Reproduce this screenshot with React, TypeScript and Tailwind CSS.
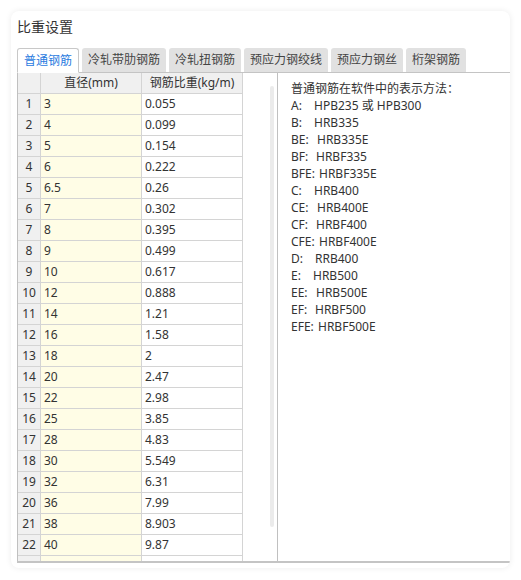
import React from "react";

const rows: [string, string][] = [
  ["3", "0.055"],
  ["4", "0.099"],
  ["5", "0.154"],
  ["6", "0.222"],
  ["6.5", "0.26"],
  ["7", "0.302"],
  ["8", "0.395"],
  ["9", "0.499"],
  ["10", "0.617"],
  ["12", "0.888"],
  ["14", "1.21"],
  ["16", "1.58"],
  ["18", "2"],
  ["20", "2.47"],
  ["22", "2.98"],
  ["25", "3.85"],
  ["28", "4.83"],
  ["30", "5.549"],
  ["32", "6.31"],
  ["36", "7.99"],
  ["38", "8.903"],
  ["40", "9.87"],
];

const tabs: { label: string; w: string; active?: boolean }[] = [
  { label: "普通钢筋", w: "w-[62px]", active: true },
  { label: "冷轧带肋钢筋", w: "w-[84px]" },
  { label: "冷轧扭钢筋", w: "w-[72px]" },
  { label: "预应力钢绞线", w: "w-[84px]" },
  { label: "预应力钢丝", w: "w-[72px]" },
  { label: "桁架钢筋", w: "w-[60px]" },
];

const legend: { k: string; w: string; v: string }[] = [
  { k: "A:", w: "w-[23px]", v: "HPB235 或 HPB300" },
  { k: "B:", w: "w-[23px]", v: "HRB335" },
  { k: "BE:", w: "w-[26px]", v: "HRB335E" },
  { k: "BF:", w: "w-[25px]", v: "HRBF335" },
  { k: "BFE:", w: "w-[28px]", v: "HRBF335E" },
  { k: "C:", w: "w-[23px]", v: "HRB400" },
  { k: "CE:", w: "w-[26px]", v: "HRB400E" },
  { k: "CF:", w: "w-[25px]", v: "HRBF400" },
  { k: "CFE:", w: "w-[28px]", v: "HRBF400E" },
  { k: "D:", w: "w-[24px]", v: "RRB400" },
  { k: "E:", w: "w-[22px]", v: "HRB500" },
  { k: "EE:", w: "w-[25px]", v: "HRB500E" },
  { k: "EF:", w: "w-[24px]", v: "HRBF500" },
  { k: "EFE:", w: "w-[27px]", v: "HRBF500E" },
];

export default function App() {
  return (
    <div
      className="w-[521px] h-[580px] bg-white pt-[11px] pl-[11px] text-[#333]"
      style={{ fontFamily: '"Noto Sans", "Noto Sans CJK SC", sans-serif' }}
    >
      <div className="w-[499px] h-[557px] rounded-[8px] bg-white shadow-[0_0_6px_rgba(0,0,0,0.08)] pt-[6px] pl-[6px] pb-[5px] flex flex-col overflow-hidden">
        <div className="h-[20px] leading-[20px] text-[14px]">比重设置</div>
        <div className="mt-[11px] flex items-end gap-[3px] h-[25px] relative z-10 -mb-px">
          {tabs.map((t) =>
            t.active ? (
              <div
                key={t.label}
                className={`${t.w} h-[25px] leading-[23px] text-center text-[12px] text-[#2a7be0] bg-white border border-[#c8c8c8] border-b-white rounded-t-[3px]`}
              >
                {t.label}
              </div>
            ) : (
              <div
                key={t.label}
                className={`${t.w} h-[24px] leading-[24px] text-center text-[12px] text-[#444] bg-[#e1e1e1] rounded-t-[3px] mb-px`}
              >
                {t.label}
              </div>
            )
          )}
        </div>
        <div className="flex-1 flex border-t border-[#c4c4c4] border-b-2 border-b-[#c4c4c4] min-h-0">
          <div className="w-[261px] border-l border-r border-[#c0c0c0] flex overflow-hidden">
            <div className="w-[225px] text-[12px] overflow-hidden">
              <div className="grid grid-cols-[23px_101px_101px] h-[21px] bg-[#f0f0f0]">
                <div className="border-r border-b border-[#d4d4d4]" />
                <div className="border-r border-b border-[#d4d4d4] text-center leading-[20px]">直径(mm)</div>
                <div className="border-r border-b border-[#d4d4d4] text-center leading-[20px]">钢筋比重(kg/m)</div>
              </div>
              {rows.map(([d, w], i) => (
                <div key={i} className="grid grid-cols-[23px_101px_101px] h-[21px]">
                  <div className="bg-[#f0f0f0] border-r border-b border-[#d4d4d4] text-center leading-[20px]">{i + 1}</div>
                  <div className="bg-[#fffde6] border-r border-b border-[#d4d4d4] pl-[3px] leading-[20px]">{d}</div>
                  <div className="bg-white border-r border-b border-[#d4d4d4] pl-[3px] leading-[20px]">{w}</div>
                </div>
              ))}
              <div className="grid grid-cols-[23px_101px_101px] h-[21px]">
                <div className="bg-[#f0f0f0] border-r border-[#d4d4d4]" />
                <div className="bg-[#fffde6] border-r border-[#d4d4d4]" />
                <div className="bg-white border-r border-[#d4d4d4]" />
              </div>
            </div>
            <div className="flex-1 flex justify-end pr-[3px]">
              <div className="w-[4px] h-[441px] mt-[13px] rounded-full bg-[#ebebeb]" />
            </div>
          </div>
          <div className="flex-1 pt-[7px] pl-[13px] text-[12px] leading-[17px] text-[#333]">
            <div>普通钢筋在软件中的表示方法：</div>
            {legend.map((l) => (
              <div key={l.k} className="whitespace-nowrap">
                <span className={`inline-block ${l.w}`}>{l.k}</span>
                {l.v}
              </div>
            ))}
          </div>
        </div>
      </div>
    </div>
  );
}
